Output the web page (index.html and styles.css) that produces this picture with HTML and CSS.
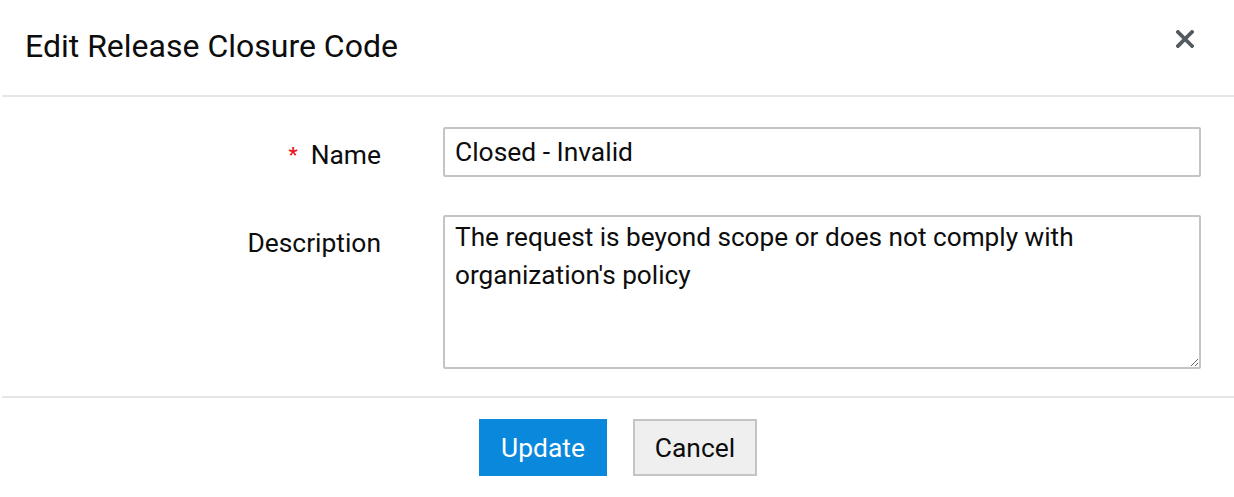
FILE: index.html
```html
<!DOCTYPE html>
<html>
<head>
<meta charset="utf-8">
<link rel="stylesheet" href="styles.css">
</head>
<body>
<div class="dialog">
  <div class="header">
    <h1 class="title">Edit Release Closure Code</h1>
    <button class="close" aria-label="Close">
      <svg width="18" height="18" viewBox="0 0 18 18"><path d="M2 2 L16 16 M16 2 L2 16" stroke="#535b62" stroke-width="3.8" stroke-linecap="square"/></svg>
    </button>
  </div>
  <div class="body">
    <div class="form">
      <label class="label label-name"><span class="req">*</span>Name</label>
      <input class="input" type="text" value="Closed - Invalid">
      <label class="label label-desc">Description</label>
      <textarea class="textarea">The request is beyond scope or does not comply with organization's policy</textarea>
    </div>
  </div>
  <div class="footer">
    <button class="btn btn-primary">Update</button>
    <button class="btn btn-default">Cancel</button>
  </div>
</div>
</body>
</html>
```

FILE: styles.css
```css
html, body {
  margin: 0;
  padding: 0;
  background: #fff;
}
body {
  font-family: Roboto, "Liberation Sans", sans-serif;
  color: #0d0d0d;
}
.dialog {
  width: 1234px;
  height: 497px;
  display: flex;
  flex-direction: column;
}
.header {
  display: flex;
  align-items: center;
  justify-content: space-between;
  border-bottom: 2px solid #e6e6e6;
  margin-left: 2px;
  padding: 0 40px 0 23px;
  box-sizing: border-box;
  height: 97px;
}
.title {
  margin: 0 0 4px;
  font-weight: 400;
  font-size: 32px;
  color: #0d0d0d;
}
.close {
  border: 0;
  background: none;
  padding: 0;
  width: 18px;
  height: 18px;
  margin-top: -18px;
  cursor: pointer;
}
.close svg { display: block; }
.body {
  padding: 30px 0 27px;
  border-bottom: 2px solid #e6e6e6;
  margin-left: 2px;
}
.form {
  display: grid;
  grid-template-columns: 379px 758px;
  grid-template-rows: 50px 154px;
  column-gap: 62px;
  row-gap: 38px;
}
.label {
  font-size: 26.4px;
  text-align: right;
  color: #0d0d0d;
  box-sizing: border-box;
}
.label-name {
  line-height: 44px;
  padding-top: 6px;
}
.label-desc {
  line-height: 37px;
  padding-top: 10px;
}
.req {
  color: #e8141b;
  font-size: 20px;
  font-weight: 700;
  margin-right: 13px;
  position: relative;
  top: -2px;
}
.input, .textarea {
  font-family: Roboto, "Liberation Sans", sans-serif;
  font-size: 26.4px;
  color: #0d0d0d;
  border: 2px solid #c4c4c4;
  border-radius: 2px;
  box-sizing: border-box;
  width: 758px;
  margin: 0;
  outline: none;
}
.input {
  height: 50px;
  padding: 0 10px;
}
.textarea {
  font-size: 26.2px;
  height: 154px;
  padding: 1px 10px 0;
  line-height: 38px;
  resize: vertical;
}
.footer {
  display: flex;
  justify-content: center;
  gap: 26px;
  padding: 21px 0 0 2px;
}
.btn {
  font-family: Roboto, "Liberation Sans", sans-serif;
  font-size: 26.4px;
  height: 57px;
  box-sizing: border-box;
  border-radius: 0;
  cursor: pointer;
}
.btn-primary {
  width: 128px;
  background: #0a88dc;
  border: 1px solid #0a88dc;
  color: #fff;
}
.btn-default {
  width: 124px;
  background: #efefef;
  border: 2px solid #c4c4c4;
  color: #0d0d0d;
}
```
